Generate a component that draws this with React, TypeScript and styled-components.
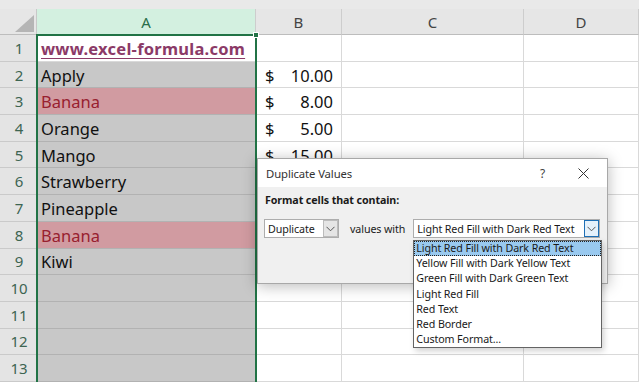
import React from "react";
import styled, { createGlobalStyle } from "styled-components";

const Global = createGlobalStyle`
  html, body { margin: 0; padding: 0; background: #fff; overflow: hidden; }
  * { box-sizing: border-box; }
`;

const COLS = "37px 219px 86px 182px 115px";
const ROW_H = 26.7;

const Sheet = styled.div`
  position: relative;
  width: 639px;
  height: 382px;
  overflow: hidden;
  background: #fff;
  font-family: "Noto Sans", "Open Sans", sans-serif;
`;

const TopStrip = styled.div`
  height: 9px;
  background: #e9e9e9;
`;

const Grid = styled.div`
  display: grid;
  grid-template-columns: ${COLS};
  grid-auto-rows: ${ROW_H}px;
  grid-template-rows: 26px;
`;

const Corner = styled.div`
  background: #e6e6e6;
  border-bottom: 1px solid #bdbdbd;
  border-right: 1px solid #c8c8c8;
  position: relative;
  &::after {
    content: "";
    position: absolute;
    left: 15px;
    top: 6px;
    width: 19px;
    height: 17px;
    background: #b5b5b5;
    clip-path: polygon(100% 0, 100% 100%, 0 100%);
  }
`;

const ColHead = styled.div<{ $sel?: boolean }>`
  background: ${(p) => (p.$sel ? "#d3f0e0" : "#e6e6e6")};
  color: ${(p) => (p.$sel ? "#2a6e4a" : "#444")};
  border-right: 1px solid #cdcdcd;
  border-bottom: 1px solid #bdbdbd;
  display: flex;
  align-items: center;
  justify-content: center;
  font-size: 15px;
  padding-top: 1px;
`;

const RowHead = styled.div`
  background: #e4e4e4;
  color: #3d6552;
  border-bottom: 1px solid #cacaca;
  display: flex;
  align-items: center;
  justify-content: center;
  font-size: 15px;
  padding-left: 1px;
`;

type Fill = "sel" | "dup" | "active" | "plain";

const Cell = styled.div<{ $fill: Fill }>`
  background: ${(p) =>
    p.$fill === "sel" ? "#c8c8c8" : p.$fill === "dup" ? "#d19ba1" : "#fff"};
  color: ${(p) => (p.$fill === "dup" ? "#98202f" : "#111")};
  border-right: 1px solid #d9d9d9;
  border-bottom: 1px solid
    ${(p) => (p.$fill === "sel" || p.$fill === "dup" ? "#b2b2b2" : "#d9d9d9")};
  display: flex;
  align-items: center;
  padding: 1px 4px 0 4px;
  font-size: 16.5px;
  white-space: nowrap;
  overflow: hidden;
`;

const LinkText = styled.span`
  font-weight: 700;
  color: #8b3a67;
  text-decoration: underline;
  text-underline-offset: 3px;
  letter-spacing: 0.25px;
`;

const Money = styled.div`
  display: flex;
  justify-content: space-between;
  width: 100%;
  padding: 0 4px 0 5px;
`;

const SelectionFrame = styled.div`
  position: absolute;
  left: 36px;
  top: 34px;
  width: 221px;
  height: 360px;
  border: 2px solid #217346;
  border-bottom: none;
  pointer-events: none;
`;

const Handle = styled.div`
  position: absolute;
  left: 253px;
  top: 32px;
  width: 6px;
  height: 6px;
  background: #217346;
  border: 1px solid #fff;
`;

const Dialog = styled.div`
  position: absolute;
  left: 257px;
  top: 158px;
  width: 351px;
  height: 126px;
  background: #f0f0f0;
  border: 1px solid #a8a8a8;
  box-shadow: 0 2px 14px rgba(0, 0, 0, 0.28);
  font-family: "Noto Sans", "Open Sans", sans-serif;
  font-size: 10.7px;
  letter-spacing: -0.1px;
  color: #1a1a1a;
  display: flex;
  flex-direction: column;
`;

const TitleBar = styled.div`
  height: 28px;
  background: #fff;
  display: flex;
  align-items: center;
  padding: 0 3px 0 8px;
  font-size: 11.3px;
  color: #333;
`;

const Title = styled.div`
  flex: 1;
`;

const TitleBtn = styled.div`
  width: 41px;
  display: flex;
  justify-content: center;
  align-items: center;
  color: #444;
  font-size: 12px;
`;

const Body = styled.div`
  padding: 6px 6px;
  display: flex;
  flex-direction: column;
  gap: 12px;
`;

const Label = styled.div`
  font-weight: 700;
  padding-left: 1px;
`;

const FormRow = styled.div`
  display: flex;
  align-items: center;
`;

const Caption = styled.span`
  white-space: nowrap;
  flex-shrink: 0;
  margin: 0 8px 0 11px;
`;

const Combo = styled.div<{ $w: number }>`
  position: relative;
  flex-shrink: 0;
  width: ${(p) => p.$w}px;
  height: 19px;
  background: #fff;
  border: 1px solid #adadad;
  display: flex;
  align-items: center;
  padding-left: 3px;
`;

const ComboText = styled.div`
  flex: 1;
  white-space: nowrap;
  overflow: hidden;
`;

const ComboBtn = styled.div<{ $focus?: boolean }>`
  width: 15px;
  height: 17px;
  background: ${(p) => (p.$focus ? "#e5f1fb" : "#e5e5e5")};
  border: 1px solid ${(p) => (p.$focus ? "#1e6fb5" : "#bcbcbc")};
  display: flex;
  align-items: center;
  justify-content: center;
`;

const DropList = styled.div`
  position: absolute;
  left: -1px;
  top: 20px;
  width: 189px;
  background: #fff;
  border: 1px solid #646464;
  box-shadow: 2px 3px 6px rgba(0, 0, 0, 0.18);
`;

const Item = styled.div<{ $hl?: boolean }>`
  height: 15.2px;
  line-height: 14px;
  padding-left: 2px;
  white-space: nowrap;
  background: ${(p) => (p.$hl ? "#99c9ef" : "transparent")};
  outline: ${(p) => (p.$hl ? "1px dotted #222" : "none")};
  outline-offset: -1px;
`;

const Chevron = () => (
  <svg width="9" height="6" viewBox="0 0 9 6">
    <path d="M0.5 0.8 L4.5 4.8 L8.5 0.8" fill="none" stroke="#555" strokeWidth="1" />
  </svg>
);

const CloseX = () => (
  <svg width="11" height="11" viewBox="0 0 11 11">
    <path d="M0.5 0.5 L10.5 10.5 M10.5 0.5 L0.5 10.5" stroke="#333" strokeWidth="1" />
  </svg>
);

const colA = [
  "", "Apply", "Banana", "Orange", "Mango", "Strawberry", "Pineapple", "Banana", "Kiwi", "", "", "", "",
];
const colB: (string | null)[] = [null, "10.00", "8.00", "5.00", "15.00", null, null, null, null, null, null, null, null];

const options = [
  "Light Red Fill with Dark Red Text",
  "Yellow Fill with Dark Yellow Text",
  "Green Fill with Dark Green Text",
  "Light Red Fill",
  "Red Text",
  "Red Border",
  "Custom Format...",
];

export default function App() {
  return (
    <>
      <Global />
      <Sheet>
        <TopStrip />
        <Grid>
          <Corner />
          <ColHead $sel>A</ColHead>
          <ColHead>B</ColHead>
          <ColHead>C</ColHead>
          <ColHead>D</ColHead>
          {colA.map((a, i) => {
            const fill: Fill = i === 0 ? "active" : a === "Banana" ? "dup" : "sel";
            const b = colB[i];
            return (
              <React.Fragment key={i}>
                <RowHead>{i + 1}</RowHead>
                <Cell $fill={fill}>
                  {i === 0 ? <LinkText>www.excel-formula.com</LinkText> : a}
                </Cell>
                <Cell $fill="plain">
                  {b && (
                    <Money>
                      <span>$</span>
                      <span>{b}</span>
                    </Money>
                  )}
                </Cell>
                <Cell $fill="plain" />
                <Cell $fill="plain" />
              </React.Fragment>
            );
          })}
        </Grid>
        <SelectionFrame />
        <Handle />
        <Dialog>
          <TitleBar>
            <Title>Duplicate Values</Title>
            <TitleBtn>?</TitleBtn>
            <TitleBtn>
              <CloseX />
            </TitleBtn>
          </TitleBar>
          <Body>
            <Label>Format cells that contain:</Label>
            <FormRow>
              <Combo $w={75}>
                <ComboText>Duplicate</ComboText>
                <ComboBtn>
                  <Chevron />
                </ComboBtn>
              </Combo>
              <Caption>values with</Caption>
              <Combo $w={187}>
                <ComboText>Light Red Fill with Dark Red Text</ComboText>
                <ComboBtn $focus>
                  <Chevron />
                </ComboBtn>
                <DropList>
                  {options.map((o, i) => (
                    <Item key={o} $hl={i === 0}>
                      {o}
                    </Item>
                  ))}
                </DropList>
              </Combo>
            </FormRow>
          </Body>
        </Dialog>
      </Sheet>
    </>
  );
}
